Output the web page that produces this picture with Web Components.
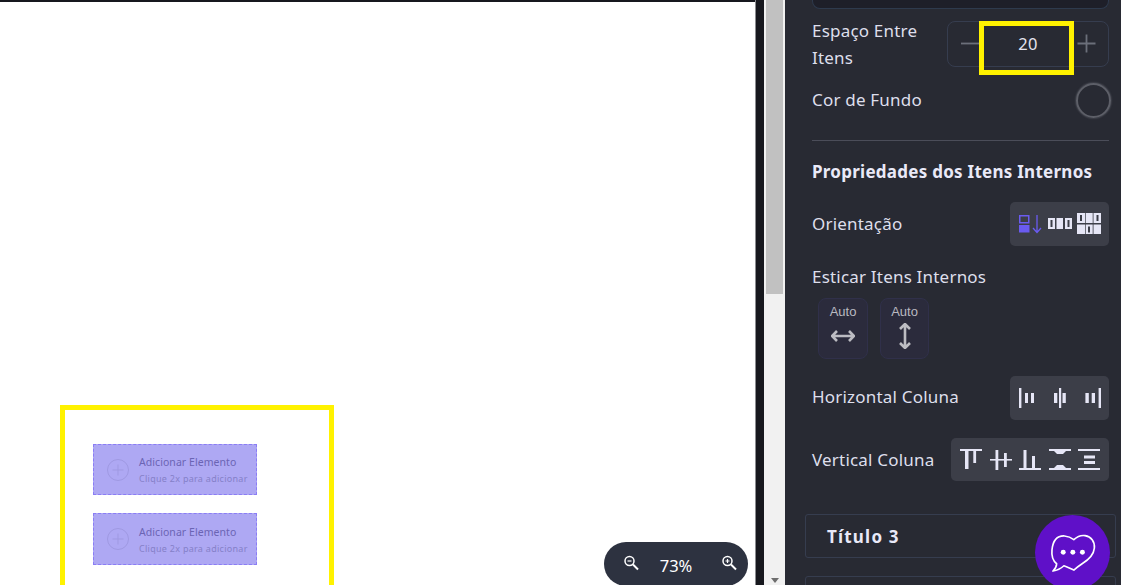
<!DOCTYPE html>
<html lang="pt">
<head>
<meta charset="utf-8">
<title>Editor</title>
<style>
  html, body { margin: 0; height: 100%; overflow: hidden; background: #17181e; }
  body { font-family: "Noto Sans", sans-serif; }
</style>
</head>
<body>
<editor-app></editor-app>
<script>
// icon strings, one 24x24 box each
const L = '#e6e6f6';
const D = '#3c3e48';
const P = '#6a5bf0';
const ICONS = {
  column: `<rect x=".75" y="3.75" width="9" height="7" fill="none" stroke="${P}" stroke-width="1.5"/><rect y="13" width="10.5" height="7.5" fill="${P}"/><path d="M18 3v17M14 16l4 4.5 4-4.5" fill="none" stroke="${P}" stroke-width="1.3"/>`,
  row: `<rect y="6" width="7" height="11" fill="${L}"/><rect x="2.5" y="8" width="2" height="7" fill="${D}"/><rect x="8.5" y="6" width="6.5" height="11" fill="${L}"/><rect x="17" y="6" width="7" height="11" fill="${L}"/><rect x="19.5" y="8" width="2" height="7" fill="${D}"/>`,
  grid: `<rect y="1" width="8" height="10" fill="${L}"/><rect x="3" y="3" width="2" height="6" fill="${D}"/><rect x="8.7" y="1" width="7" height="10" fill="${L}"/><rect x="16.5" y="1" width="7.5" height="10" fill="${L}"/><rect x="19.5" y="3" width="2" height="6" fill="${D}"/><rect y="12.5" width="8" height="9.5" fill="${L}"/><rect x="8.7" y="12.5" width="7" height="9.5" fill="${L}"/><rect x="11" y="14.5" width="2" height="6" fill="${D}"/><rect x="16.5" y="12.5" width="7.5" height="9.5" fill="${L}"/>`,
  hStart: `<rect x="3" y="2" width="2.4" height="20" fill="${L}"/><rect x="9" y="7" width="3" height="10" fill="${L}"/><rect x="15" y="7" width="3" height="10" fill="${L}"/>`,
  hCenter: `<rect x="11" y="2" width="2.2" height="20" fill="${L}"/><rect x="6" y="7" width="3.3" height="10" fill="${L}"/><rect x="14.5" y="7" width="3.3" height="10" fill="${L}"/>`,
  hEnd: `<rect x="18.6" y="2" width="2.4" height="20" fill="${L}"/><rect x="5.4" y="7" width="3.4" height="10" fill="${L}"/><rect x="11.7" y="7" width="3.3" height="10" fill="${L}"/>`,
  vTop: `<rect x="1" y="1" width="22" height="2" fill="${L}"/><rect x="6" y="3" width="3.5" height="18" fill="${L}"/><rect x="14.3" y="3" width="2.8" height="12" fill="${L}"/>`,
  vCenter: `<rect x="1" y="11" width="22" height="1.6" fill="${L}"/><rect x="6.5" y="2" width="2.8" height="20" fill="${L}"/><rect x="15" y="5" width="2.8" height="14" fill="${L}"/>`,
  vEnd: `<rect x="1" y="20" width="22" height="2" fill="${L}"/><rect x="5.5" y="2" width="3" height="18" fill="${L}"/><rect x="14" y="8" width="3" height="12" fill="${L}"/>`,
  vBetween: `<rect x="1" y="1" width="22" height="2" fill="${L}"/><path d="M6 3h12l-3 3H9z" fill="${L}"/><path d="M9 17h6l3 3H6z" fill="${L}"/><rect x="1" y="20" width="22" height="2" fill="${L}"/>`,
  vAround: `<rect x="1" y="1" width="22" height="2" fill="${L}"/><rect x="7" y="7.5" width="11" height="3" fill="${L}"/><rect x="7" y="13" width="11" height="3" fill="${L}"/><rect x="1" y="20" width="22" height="2" fill="${L}"/>`
};

class AddSlot extends HTMLElement {
  constructor() {
    super();
    this.attachShadow({ mode: 'open' });
  }

  connectedCallback() {
    this.shadowRoot.innerHTML = `
      <style>
        :host {
          display: flex;
          flex: none;
          align-items: center;
          box-sizing: border-box;
          width: 164px;
          height: 51px;
          padding-left: 13px;
          gap: 10px;
          background: #aea8f3;
          border: 1px dashed #8a7df5;
        }
        svg { flex: none; }
        .text { padding-top: 2px; }
        .title { font-size: 10.5px; line-height: 14px; color: #6b64b4; letter-spacing: .06px; }
        .sub { font-size: 9px; line-height: 14px; margin-top: 3px; color: #8580c8; letter-spacing: .28px; }
      </style>
      <svg width="22" height="22" viewBox="0 0 22 22" fill="none" stroke="#9f99e2" stroke-width="1">
        <circle cx="11" cy="11" r="10.5"/><path d="M11 5.5v11M5.5 11h11"/>
      </svg>
      <div class="text">
        <div class="title">Adicionar Elemento</div>
        <div class="sub">Clique 2x para adicionar</div>
      </div>`;
  }
}
customElements.define('add-slot', AddSlot);

class ZoomPill extends HTMLElement {
  constructor() {
    super();
    this.attachShadow({ mode: 'open' });
  }

  connectedCallback() {
    const lens = (plus) => `
      <svg width="16" height="16" viewBox="0 0 16 16" fill="none" stroke="#fff">
        <circle cx="6.5" cy="6" r="4.5" stroke-width="1.5"/>
        <path d="M10 9.5l5 5" stroke-width="2"/>
        <path d="M4.5 6h4${plus ? 'M6.5 4v4' : ''}" stroke-width="1.2"/>
      </svg>`;
    this.shadowRoot.innerHTML = `
      <style>
        :host {
          position: absolute;
          left: 604px;
          top: 542px;
          width: 144px;
          height: 44px;
          box-sizing: border-box;
          padding: 0 11px 0 19px;
          display: flex;
          align-items: center;
          justify-content: space-between;
          background: #2d3240;
          border-radius: 22px;
          color: #fff;
          font-size: 16.5px;
        }
        span { margin: 3px 8px 0 0; }
        svg { margin-top: -3px; }
      </style>
      ${lens(false)}<span>73%</span>${lens(true)}`;
  }
}
customElements.define('zoom-pill', ZoomPill);

class NumStepper extends HTMLElement {
  constructor() {
    super();
    this.attachShadow({ mode: 'open' });
  }

  connectedCallback() {
    this.shadowRoot.innerHTML = `
      <style>
        :host {
          display: flex;
          align-items: center;
          position: relative;
          box-sizing: border-box;
          width: 162px;
          height: 46px;
          border: 1px solid #363d4f;
          border-radius: 8px;
          color: #e4e4f0;
          font-size: 16.5px;
        }
        svg { flex: none; }
        .value { flex: 1; text-align: center; margin-top: -1px; }
        .mark {
          position: absolute;
          left: 31px;
          top: -1px;
          width: 95px;
          height: 54px;
          box-sizing: border-box;
          border: 5px solid #fff200;
        }
      </style>
      <svg width="46" height="20" viewBox="0 0 46 20" stroke="#6b6f7a" stroke-width="1.8"><path d="M13 9.5h20"/></svg>
      <span class="value">${this.getAttribute('value')}</span>
      <svg width="46" height="20" viewBox="0 0 46 20" stroke="#6b6f7a" stroke-width="1.8"><path d="M15.5 9.5h18M24.5 .5v18"/></svg>
      <div class="mark"></div>`;
  }
}
customElements.define('num-stepper', NumStepper);

class IconGroup extends HTMLElement {
  constructor() {
    super();
    this.attachShadow({ mode: 'open' });
  }

  connectedCallback() {
    const names = this.getAttribute('icons').split(' ');
    this.shadowRoot.innerHTML = `
      <style>
        :host {
          display: flex;
          align-items: flex-start;
          justify-content: center;
          gap: ${this.getAttribute('gap')}px;
          box-sizing: border-box;
          width: ${this.getAttribute('width')}px;
          height: ${this.getAttribute('height') || 44}px;
          padding-top: 10px;
          background: ${D};
          border-radius: 5px;
        }
        svg { flex: none; }
      </style>
      ${names.map(n => `<svg width="24" height="24" viewBox="0 0 24 24">${ICONS[n]}</svg>`).join('')}`;
  }
}
customElements.define('icon-group', IconGroup);

class PropRow extends HTMLElement {
  constructor() {
    super();
    this.attachShadow({ mode: 'open' });
  }

  connectedCallback() {
    this.shadowRoot.innerHTML = `
      <style>
        :host {
          display: flex;
          flex: none;
          align-items: center;
          justify-content: space-between;
          margin: 0 12px 0 27px;
          color: #dedfec;
          font-size: 17px;
          letter-spacing: .2px;
          line-height: 27px;
        }
        .label { width: 125px; white-space: normal; }
        .label.wide { width: auto; white-space: nowrap; margin-top: var(--lift, -2px); }
      </style>
      <div class="label ${this.hasAttribute('wide') ? 'wide' : ''}"><slot name="label"></slot></div>
      <slot></slot>`;
  }
}
customElements.define('prop-row', PropRow);

class StretchBox extends HTMLElement {
  constructor() {
    super();
    this.attachShadow({ mode: 'open' });
  }

  connectedCallback() {
    const vertical = this.getAttribute('dir') === 'v';
    const arrow = vertical
      ? '<path d="M12 1v24M7 6l5-5 5 5M7 20l5 5 5-5"/>'
      : '<path d="M1 13h22M6 8l-5 5 5 5M18 8l5 5-5 5"/>';
    this.shadowRoot.innerHTML = `
      <style>
        :host {
          display: flex;
          flex-direction: column;
          align-items: center;
          box-sizing: border-box;
          width: 50px;
          height: 61px;
          padding-top: 5px;
          background: #2b2b3c;
          border: 1px solid #30304a;
          border-radius: 8px;
          color: #b9b9c0;
          font: 13px/16px "Liberation Sans", sans-serif;
        }
        svg { margin-top: 3px; }
      </style>
      <span>Auto</span>
      <svg width="24" height="26" viewBox="0 0 24 26" fill="none" stroke="#bcbcc2" stroke-width="2.6">${arrow}</svg>`;
  }
}
customElements.define('stretch-box', StretchBox);

class AccordionHead extends HTMLElement {
  constructor() {
    super();
    this.attachShadow({ mode: 'open' });
  }

  connectedCallback() {
    this.shadowRoot.innerHTML = `
      <style>
        :host {
          display: flex;
          flex: none;
          align-items: center;
          box-sizing: border-box;
          margin: 0 5px 0 20px;
          height: 44px;
          padding-left: 21px;
          border: 1px solid #363d4f;
          border-radius: 3px;
          color: #e9e9f8;
          font-size: 17px;
          font-weight: 700;
          letter-spacing: 1.2px;
        }
      </style>
      <slot></slot>`;
  }
}
customElements.define('accordion-head', AccordionHead);

class ChatFab extends HTMLElement {
  constructor() {
    super();
    this.attachShadow({ mode: 'open' });
  }

  connectedCallback() {
    this.shadowRoot.innerHTML = `
      <style>
        :host {
          position: absolute;
          left: 1035px;
          top: 515px;
          width: 75px;
          height: 75px;
          display: flex;
          align-items: center;
          justify-content: center;
          border-radius: 50%;
          background: #5f10c8;
        }
      </style>
      <svg width="48" height="42" viewBox="85 80 145 125" fill="none" stroke="#fff" stroke-width="5" stroke-linejoin="round">
        <path d="M97 197C104 190 108 183 108 175C96 165 92 152 94 133C97 103 112 90 132 91C143 92 152 96 160 102C170 93 182 88 194 90C212 93 224 108 222 128C220 150 205 163 185 175C176 181 168 187 160 194C150 190 140 184 130 181C120 190 110 195 97 197Z"/>
        <circle cx="128" cy="140" r="7.5" fill="#fff" stroke="none"/>
        <circle cx="157" cy="140" r="7.5" fill="#fff" stroke="none"/>
        <circle cx="186" cy="140" r="7.5" fill="#fff" stroke="none"/>
      </svg>`;
  }
}
customElements.define('chat-fab', ChatFab);

class SidePanel extends HTMLElement {
  constructor() {
    super();
    this.attachShadow({ mode: 'open' });
  }

  connectedCallback() {
    this.shadowRoot.innerHTML = `
      <style>
        :host {
          display: flex;
          flex-direction: column;
          flex: none;
          width: 336px;
          height: 585px;
          overflow: hidden;
          background: #282a33;
        }
        .well {
          flex: none;
          height: 9px;
          margin: 0 12px 0 27px;
          box-sizing: border-box;
          background: #1e1f29;
          border: 1px solid #2e3a4d;
          border-top: 0;
          border-radius: 0 0 8px 8px;
        }
        hr {
          flex: none;
          width: 297px;
          height: 1px;
          margin: 22px 0 0 27px;
          border: 0;
          background: #4b4d59;
        }
        .heading {
          flex: none;
          margin: 19px 12px 0 27px;
          color: #e9e9f8;
          font-size: 17px;
          font-weight: 700;
          letter-spacing: .26px;
          line-height: 24px;
          white-space: nowrap;
        }
        .stretch {
          flex: none;
          display: flex;
          gap: 12px;
          margin: 9px 0 0 33px;
        }
        .swatch {
          box-sizing: border-box;
          width: 35px;
          height: 35px;
          border-radius: 50%;
          border: 2px solid #5d5f68;
          box-shadow: 0 0 2px #6d6f78;
        }
      </style>
      <div class="well"></div>
      <prop-row style="margin-top:12px;height:46px">
        <span slot="label">Espaço Entre Itens</span>
        <num-stepper value="20"></num-stepper>
      </prop-row>
      <prop-row wide style="margin-top:16px;height:35px">
        <span slot="label">Cor de Fundo</span>
        <div class="swatch" style="margin-right:-2px"></div>
      </prop-row>
      <hr>
      <div class="heading">Propriedades dos Itens Internos</div>
      <prop-row wide style="margin-top:18px;height:44px">
        <span slot="label">Orientação</span>
        <icon-group width="99" gap="5" icons="column row grid"></icon-group>
      </prop-row>
      <prop-row wide style="margin-top:19px;height:24px">
        <span slot="label">Esticar Itens Internos</span>
      </prop-row>
      <div class="stretch">
        <stretch-box dir="h"></stretch-box>
        <stretch-box dir="v" style="width:49px"></stretch-box>
      </div>
      <prop-row wide style="margin-top:17px;height:44px;--lift:-3px">
        <span slot="label">Horizontal Coluna</span>
        <icon-group width="99" gap="8" icons="hStart hCenter hEnd"></icon-group>
      </prop-row>
      <prop-row wide style="margin-top:18px;height:43px;--lift:0px">
        <span slot="label">Vertical Coluna</span>
        <icon-group width="158" height="43" gap="5.5" icons="vTop vCenter vEnd vBetween vAround"></icon-group>
      </prop-row>
      <accordion-head style="margin-top:33px">Título 3</accordion-head>
      <accordion-head style="margin-top:18px"></accordion-head>`;
  }
}
customElements.define('side-panel', SidePanel);

class EditorApp extends HTMLElement {
  constructor() {
    super();
    this.attachShadow({ mode: 'open' });
  }

  connectedCallback() {
    this.shadowRoot.innerHTML = `
      <style>
        :host {
          display: flex;
          position: relative;
          width: 1121px;
          height: 585px;
          overflow: hidden;
          background: #17181e;
        }
        .stage {
          flex: none;
          box-sizing: border-box;
          width: 755px;
          height: 583px;
          margin-top: 2px;
          padding: 403px 0 0 60px;
          overflow: hidden;
          background: #fff;
        }
        .frame {
          box-sizing: border-box;
          width: 274px;
          height: 240px;
          padding: 34px 0 0 28px;
          border: 5px solid #fff200;
          display: flex;
          flex-direction: column;
          gap: 18px;
        }
        .gutter {
          flex: none;
          box-sizing: border-box;
          width: 9px;
          border-left: 1px solid #8b8c90;
        }
        .scrollbar {
          flex: none;
          box-sizing: border-box;
          width: 21px;
          padding: 0 2px;
          background: #f1f1f1;
          display: flex;
          flex-direction: column;
          justify-content: space-between;
          align-items: center;
        }
        .thumb { width: 17px; height: 294px; background: #c1c1c1; }
        .arrow {
          width: 0;
          height: 0;
          margin-bottom: 2px;
          border: 4.5px solid transparent;
          border-top: 5px solid #6e6e6e;
          border-bottom: 0;
        }
      </style>
      <div class="stage">
        <div class="frame">
          <add-slot></add-slot>
          <add-slot style="height:52px"></add-slot>
        </div>
      </div>
      <div class="gutter"></div>
      <div class="scrollbar"><div class="thumb"></div><div class="arrow"></div></div>
      <side-panel></side-panel>
      <zoom-pill></zoom-pill>
      <chat-fab></chat-fab>`;
  }
}
customElements.define('editor-app', EditorApp);
</script>
</body>
</html>
